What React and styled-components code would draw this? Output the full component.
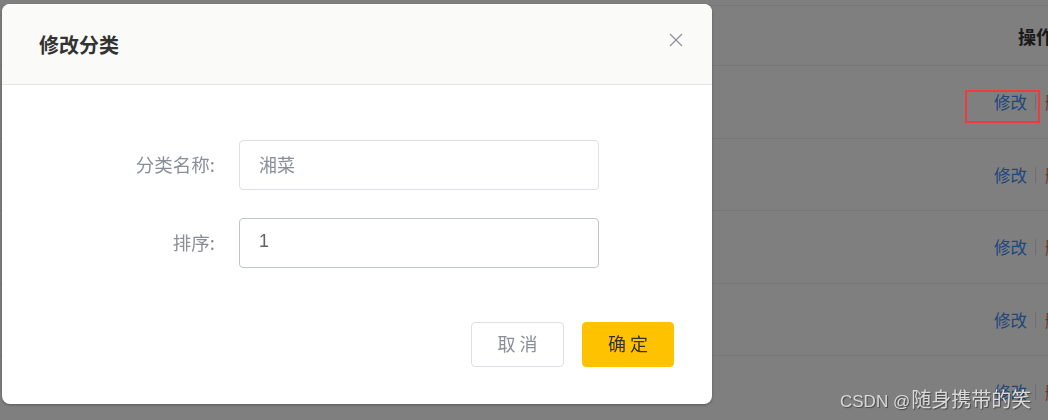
import React from "react";
import styled, { createGlobalStyle } from "styled-components";

const Global = createGlobalStyle`
  html, body { margin: 0; padding: 0; background: #fff; overflow: hidden; }
  body { font-family: "Noto Sans CJK SC", "Noto Sans", sans-serif; width: 1048px; height: 420px; }
  * { box-sizing: border-box; }
`;

const Page = styled.div`
  width: 1048px;
  height: 420px;
  overflow: hidden;
  padding-top: 5px;
`;

const Table = styled.div`
  width: 1110px;
  border-top: 1px solid #ebeef5;
`;

const Row = styled.div`
  display: grid;
  grid-template-columns: 1fr 130px;
  align-items: center;
  height: ${(p) => p.$h}px;
  border-bottom: 1px solid #ebeef5;
`;

const HeadCell = styled.div`
  padding-left: 38px;
  font-size: 18px;
  font-weight: 700;
  color: #333;
  line-height: 24px;
`;

const Actions = styled.div`
  display: flex;
  align-items: center;
  padding-left: 14px;
  font-size: 16.5px;
  line-height: 22px;
`;

const Link = styled.span`
  color: ${(p) => (p.$danger ? "#e8604a" : "#3e8ef7")};
  white-space: nowrap;
`;

const Sep = styled.span`
  width: 1px;
  height: 16px;
  background: #dcdfe6;
  margin: 0 9px 0 8px;
`;

const Mask = styled.div`
  position: fixed;
  inset: 0;
  background: rgba(0, 0, 0, 0.5);
`;

const Dialog = styled.div`
  position: fixed;
  left: 2px;
  top: 4px;
  width: 710px;
  height: 400px;
  background: #fff;
  border-radius: 8px;
  box-shadow: 0 1px 3px rgba(0, 0, 0, 0.3);
  display: flex;
  flex-direction: column;
  overflow: hidden;
`;

const Header = styled.div`
  height: 81px;
  flex: none;
  display: flex;
  align-items: center;
  justify-content: space-between;
  padding: 0 28px 0 37px;
  background: #fafaf9;
  border-bottom: 1px solid #e4e4e4;
`;

const Title = styled.div`
  font-size: 20px;
  font-weight: 700;
  color: #333;
  line-height: 26px;
  padding-top: 1px;
`;

const Close = styled.button`
  align-self: flex-start;
  margin-top: 28px;
  width: 16px;
  height: 16px;
  padding: 0;
  border: 0;
  background: none;
  display: flex;
  align-items: center;
  justify-content: center;
`;

const Body = styled.div`
  padding: 55px 0 0 0;
  display: grid;
  grid-template-columns: 213px 360px;
  column-gap: 24px;
  row-gap: 28px;
  align-items: center;
`;

const Label = styled.div`
  text-align: right;
  font-size: 18.5px;
  line-height: 24px;
  color: #8a8e99;
  padding-bottom: 3px;
`;

const Input = styled.div`
  height: 50px;
  border: 1px solid ${(p) => (p.$active ? "#c0c4cc" : "#dcdfe6")};
  border-radius: 4px;
  padding: 0 0 3px 19px;
  display: flex;
  align-items: center;
  font-size: 18px;
  color: ${(p) => (p.$muted ? "#8a8e99" : "#606266")};
  font-family: ${(p) => (p.$latin ? '"Liberation Sans", sans-serif' : "inherit")};
`;

const Footer = styled.div`
  margin-top: auto;
  padding: 0 38px 37px 0;
  display: flex;
  justify-content: flex-end;
  gap: 18px;
`;

const Button = styled.button`
  width: ${(p) => (p.$primary ? 92 : 93)}px;
  height: 45px;
  border-radius: 4px;
  border: 1px solid ${(p) => (p.$primary ? "#ffc200" : "#dcdfe6")};
  background: ${(p) => (p.$primary ? "#ffc200" : "#fff")};
  color: ${(p) => (p.$primary ? "#333" : "#8a8e99")};
  font-family: "Noto Sans CJK SC", sans-serif;
  font-size: 18px;
  line-height: 24px;
  letter-spacing: 4px;
  padding: 0 0 4px 4px;
`;

const Mark = styled.div`
  position: fixed;
  left: 965px;
  top: 90px;
  width: 75px;
  height: 33px;
  border: 2px solid #f23a3a;
`;

const Watermark = styled.div`
  position: fixed;
  left: 840px;
  top: 386px;
  color: #dadada;
  text-shadow: 1px 1px 1px rgba(0, 0, 0, 0.45);
  white-space: nowrap;
  line-height: 26px;
  display: flex;
  align-items: baseline;
`;

const WmLatin = styled.span`
  font-family: "Liberation Sans", sans-serif;
  font-size: 17px;
  margin-right: 1px;
`;

const WmCjk = styled.span`
  font-family: "Noto Sans CJK SC", sans-serif;
  font-size: 20px;
`;

const rows = [73, 72, 73, 72, 73];

export default function App() {
  return (
    <>
      <Global />
      <Page>
        <Table>
          <Row $h={60}>
            <div />
            <HeadCell>操作</HeadCell>
          </Row>
          {rows.map((h, i) => (
            <Row key={i} $h={h}>
              <div />
              <Actions>
                <Link>修改</Link>
                <Sep />
                <Link $danger>删除</Link>
              </Actions>
            </Row>
          ))}
        </Table>
      </Page>
      <Mask />
      <Mark />
      <Dialog>
        <Header>
          <Title>修改分类</Title>
          <Close aria-label="close">
            <svg width="14" height="14" viewBox="0 0 14 14">
              <path d="M1 1L13 13M13 1L1 13" stroke="#909399" strokeWidth="1.3" fill="none" />
            </svg>
          </Close>
        </Header>
        <Body>
          <Label>分类名称:</Label>
          <Input $muted>湘菜</Input>
          <Label>排序:</Label>
          <Input $active $latin>1</Input>
        </Body>
        <Footer>
          <Button>取消</Button>
          <Button $primary>确定</Button>
        </Footer>
      </Dialog>
      <Watermark>
        <WmLatin>CSDN @</WmLatin>
        <WmCjk>随身携带的笑</WmCjk>
      </Watermark>
    </>
  );
}
